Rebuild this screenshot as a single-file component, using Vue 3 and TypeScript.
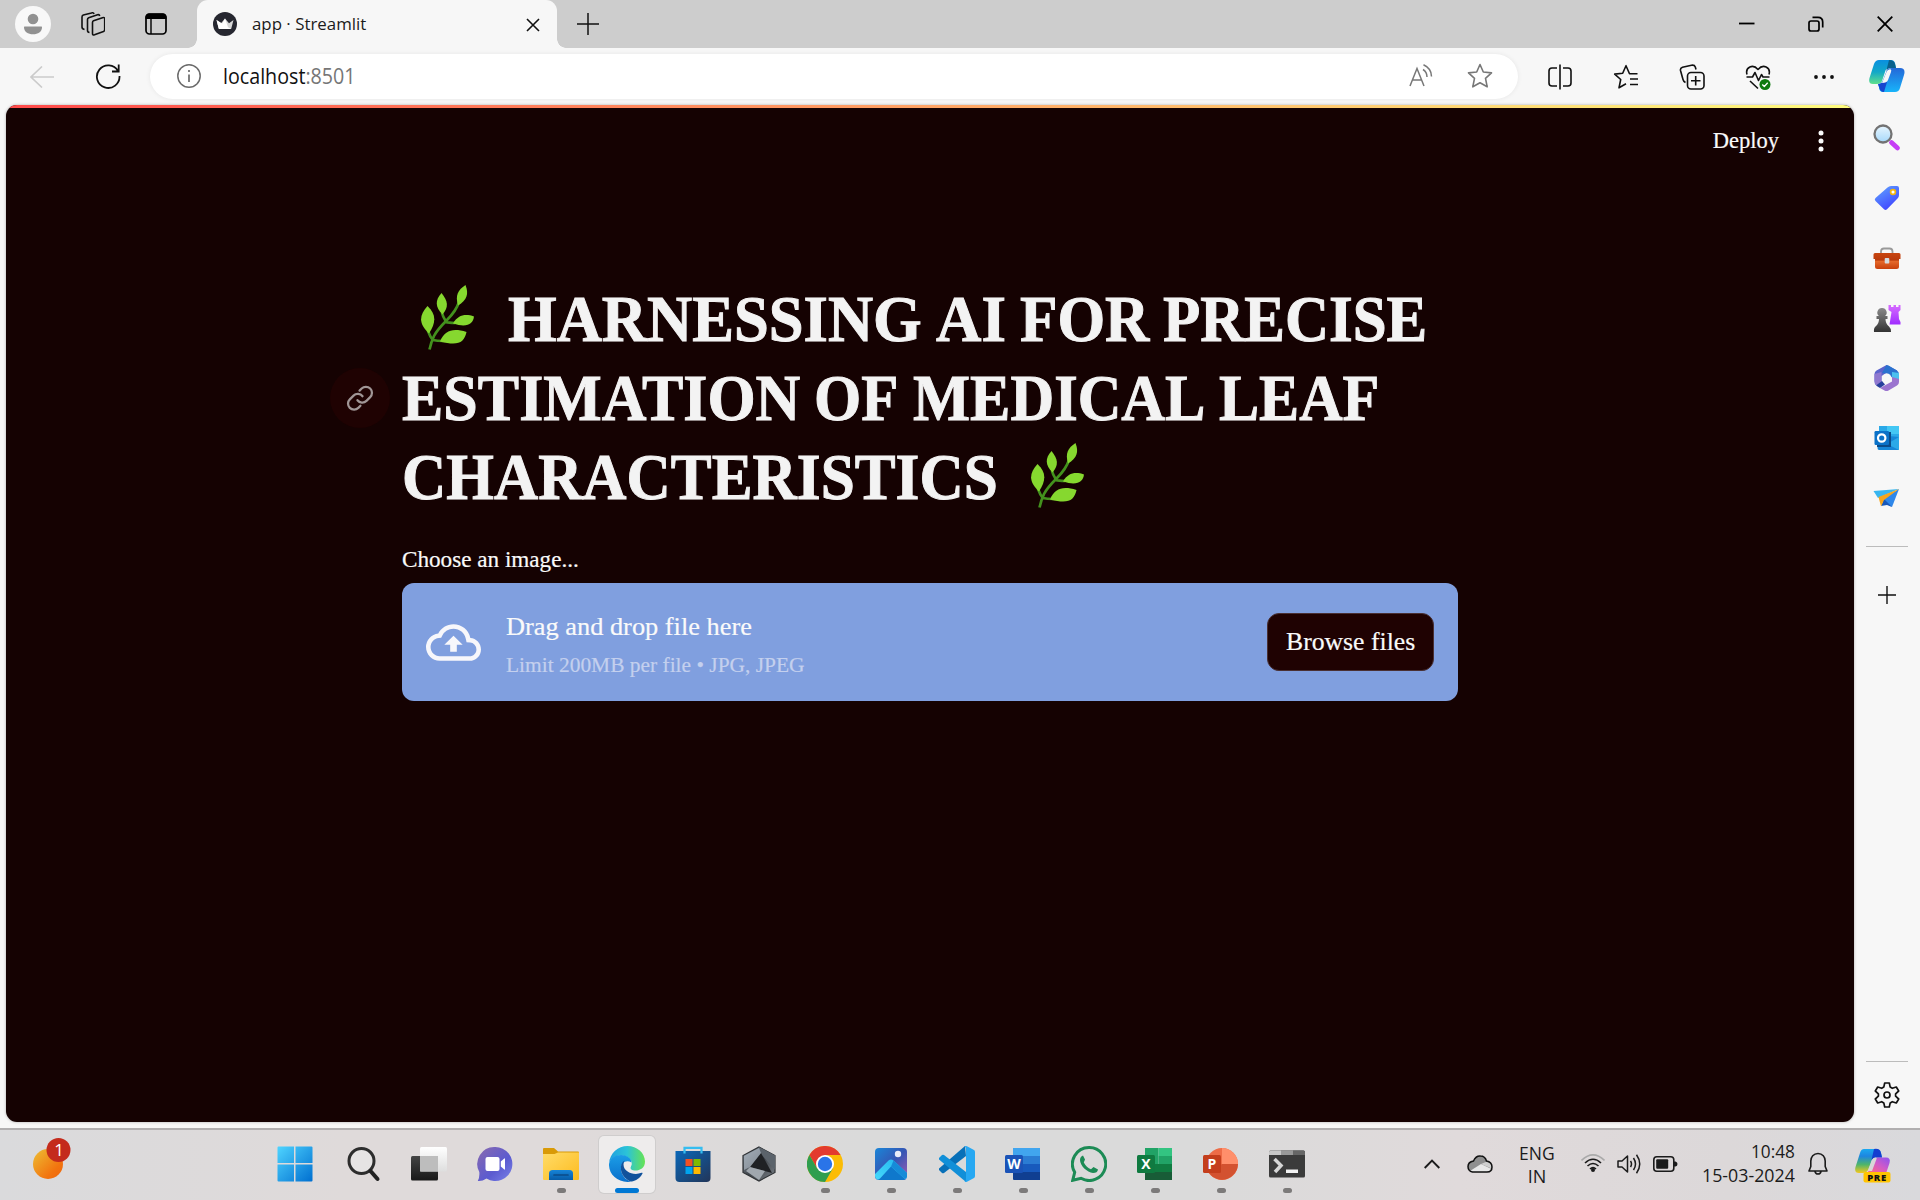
<script setup lang="ts">
import type { ObjectDirective } from 'vue'

interface Word {
  text: string
  width: number
}

// Condenses or widens a line of text to the given width in pixels.
const vFit: ObjectDirective<HTMLElement, number> = {
  mounted(el, binding) {
    const natural = el.offsetWidth
    if (!natural) return
    el.style.transform = `scaleX(${binding.value / natural})`
    el.style.marginRight = `${binding.value - natural}px`
  },
}

const titleTop: Word[] = [
  { text: 'HARNESSING', width: 414 },
  { text: 'AI', width: 70 },
  { text: 'FOR', width: 129 },
  { text: 'PRECISE', width: 264 },
]
const titleMiddle: Word[] = [
  { text: 'ESTIMATION', width: 398 },
  { text: 'OF', width: 84 },
  { text: 'MEDICAL', width: 292 },
  { text: 'LEAF', width: 160 },
]
</script>

<template>
  <div class="screen">
    <svg class="defs" width="0" height="0" aria-hidden="true">
      <defs>
        <symbol id="herb" viewBox="0 0 54 66">
          <path d="M8.5 64.5C10 58 11.5 54 13 51C16 45 22 39 26 35C32 29 36 23 38 17M21 28C22 32 23.500 34 25 36.500M7 46C8.500 50 10 53 12 55.500M24 37C28 37.500 31 38 34 38M12 55C16 56 19 56 22 56" fill="none" stroke="#43911d" stroke-width="2.700" />
          <g fill="#86d82f">
            <path d="M44.500 0C48 9 46 15 37 20.500C34 10 37 5 44.500 0Z" />
            <path d="M20.500 8C27 16 28 22 21.500 29.500C14 22 14 15 20.500 8Z" />
            <path d="M6.500 21C15 29 15.500 37 8 48.500C-2 39-2.500 31 6.500 21Z" />
            <path d="M53 31.500C52 39 46 43 32 38.500C37 30 44 28.500 53 31.500Z" />
            <path d="M45.500 47C43 58 37 61 19 56.500C24 45 32 43 45.500 47Z" />
          </g>
        </symbol>
        <linearGradient id="gStart" x1="0" y1="0" x2="1" y2="1"><stop stop-color="#4fd4ff" /><stop offset="1" stop-color="#006fd0" /></linearGradient>
        <linearGradient id="gSun" x1="0" y1="0" x2="1" y2="1"><stop stop-color="#edbf34" /><stop offset=".7" stop-color="#f2740f" /><stop offset="1" stop-color="#ef640c" /></linearGradient>
        <linearGradient id="gDark" x1="0" y1="0" x2="0" y2="1"><stop stop-color="#444" /><stop offset="1" stop-color="#181818" /></linearGradient>
        <linearGradient id="gWhite" x1="0" y1="0" x2="0" y2="1"><stop stop-color="#fff" /><stop offset="1" stop-color="#dedede" /></linearGradient>
        <linearGradient id="gChat" x1="0" y1="0" x2="1" y2="1"><stop stop-color="#8a6aae" /><stop offset=".6" stop-color="#5b5bd0" /><stop offset="1" stop-color="#7b83e8" /></linearGradient>
        <linearGradient id="gFolder" x1="0" y1="0" x2="1" y2="1"><stop stop-color="#ffdc68" /><stop offset="1" stop-color="#fdbb1f" /></linearGradient>
        <linearGradient id="gBlue" x1="0" y1="0" x2="0" y2="1"><stop stop-color="#1684d8" /><stop offset="1" stop-color="#075ca8" /></linearGradient>
        <linearGradient id="gEdgeTop" x1="0" y1="0" x2="1" y2="0"><stop stop-color="#1f9fe0" /><stop offset=".5" stop-color="#2bc3d8" /><stop offset="1" stop-color="#66e353" /></linearGradient>
        <linearGradient id="gEdge" x1="0" y1="0" x2="0" y2="1"><stop stop-color="#1b9de6" /><stop offset="1" stop-color="#0a6fcb" /></linearGradient>
        <linearGradient id="gStore" x1="0" y1="0" x2="1" y2="1"><stop stop-color="#0a67b8" /><stop offset="1" stop-color="#223558" /></linearGradient>
        <linearGradient id="gHex" x1="0" y1="0" x2="1" y2="1"><stop stop-color="#9aa6b2" /><stop offset=".5" stop-color="#3f444a" /><stop offset="1" stop-color="#7d838a" /></linearGradient>
        <linearGradient id="gPhoto" x1="0" y1="0" x2="1" y2="1"><stop stop-color="#1a86d8" /><stop offset=".5" stop-color="#3556b4" /><stop offset="1" stop-color="#a15bb4" /></linearGradient>
        <linearGradient id="gPeak" x1="0" y1="1" x2="1" y2="0"><stop stop-color="#45d8fb" /><stop offset="1" stop-color="#22b5ee" /></linearGradient>
        <linearGradient id="gCopA" x1="0" y1="0" x2="0" y2="1"><stop stop-color="#0a8fe0" /><stop offset=".5" stop-color="#12a8c8" /><stop offset="1" stop-color="#5fe08c" /></linearGradient>
        <linearGradient id="gCopB" x1="0" y1="0" x2="0" y2="1"><stop stop-color="#2468d8" /><stop offset="1" stop-color="#18b4fa" /></linearGradient>
        <linearGradient id="gCopC" x1="0" y1="0" x2="0" y2="1"><stop stop-color="#1aa8f0" /><stop offset=".3" stop-color="#1d86e0" /><stop offset=".65" stop-color="#4fb56a" /><stop offset="1" stop-color="#f5c81c" /></linearGradient>
        <linearGradient id="gCopD" x1="1" y1="0" x2="0" y2="1"><stop stop-color="#8b53f0" /><stop offset=".5" stop-color="#d05ac8" /><stop offset="1" stop-color="#ff6a80" /></linearGradient>
        <linearGradient id="gTag" x1="0" y1="0" x2=".6" y2="1"><stop stop-color="#62a8ff" /><stop offset="1" stop-color="#4046ff" /></linearGradient>
        <linearGradient id="gBox" x1="0" y1="0" x2="0" y2="1"><stop stop-color="#c8450f" /><stop offset=".45" stop-color="#b93a0c" /><stop offset=".5" stop-color="#e66a2c" /><stop offset="1" stop-color="#c8400c" /></linearGradient>
        <linearGradient id="gPawn" x1="0" y1="0" x2="0" y2="1"><stop stop-color="#8a8a8a" /><stop offset="1" stop-color="#333" /></linearGradient>
        <linearGradient id="gRook" x1="0" y1="0" x2="0" y2="1"><stop stop-color="#d66cff" /><stop offset="1" stop-color="#a02cff" /></linearGradient>
        <linearGradient id="gLens" x1="0" y1="0" x2="0" y2="1"><stop stop-color="#e8f6ff" /><stop offset="1" stop-color="#a6d8fa" /></linearGradient>
      </defs>
    </svg>

    <header class="titlebar">
      <svg class="avatar" width="36" height="36" viewBox="0 0 36 36"><circle cx="18" cy="18" r="18" fill="#f8f8f8" /><g fill="#919191"><circle cx="18" cy="13" r="5.300" /><path d="M9.500 20.500h17q.5 0 .5.800c0 4.500-4 7-9 7s-9-2.500-9-7q0-.8.5-.8Z" /></g></svg>
      <svg class="workspaces" width="24" height="24" viewBox="0 0 24 24" fill="none" stroke="#111" stroke-width="1.600" stroke-linejoin="round"><path d="M12.500 8.800 21.500 5.700Q23.700 5 23.700 7V17.500Q23.700 19 22.500 19.500L13.500 22.800Q11.500 23.400 11.500 21.500V10.500Q11.500 9.200 12.500 8.800Z" /><path d="M8.500 20.500Q6.500 20.300 6.500 18.500V7.500Q6.500 6.200 7.700 5.700L16.500 2.700Q18.300 2.200 18.700 4M3.500 17.500Q1 17 1 15V5Q1 3.600 2.300 3.100L10.500.9Q12.500.3 13 2" /></svg>
      <svg class="tabactions" width="22" height="22" viewBox="0 0 22 22"><rect x="1" y="1" width="20" height="20" rx="3.500" fill="none" stroke="#000" stroke-width="1.700" /><path d="M.5 6V4Q.5.500 4 .5H18Q21.500.500 21.500 4V6ZM5.300 6h1.400v15H5.300Z" /></svg>
      <div class="tab">
        <svg width="24" height="24" viewBox="0 0 24 24"><circle cx="12" cy="12" r="12" fill="#262730" /><path d="M3.500 8 8 11.300 12 6.500 16 11.300 20.500 8 18.300 16.500Q18 17 17.500 17H6.500Q6 17 5.700 16.500Z" fill="#d8d8d8" /><path d="M3.500 8 18 17H6.500Q6 17 5.700 16.500ZM12 6.500 15 15 9 12Z" fill="#fff" /></svg>
        <span v-fit="114" class="fit tabname">app · Streamlit</span>
        <svg class="tabclose" width="14" height="14" viewBox="0 0 14 14" stroke="#111" stroke-width="1.600"><path d="M1 1 13 13M13 1 1 13" /></svg>
      </div>
      <svg class="newtab" width="22" height="22" viewBox="0 0 22 22" stroke="#111" stroke-width="1.500"><path d="M11 0V22M0 11H22" /></svg>
      <div class="winbtns">
        <svg width="16" height="16" viewBox="0 0 16 16" stroke="#000" stroke-width="1.800"><path d="M0 7.500H15.500" /></svg>
        <svg width="16" height="16" viewBox="0 0 16 16" fill="none" stroke="#000" stroke-width="1.700"><rect x="1" y="5" width="10" height="10" rx="2" /><path d="M4.500 1.300H10Q14.700 1.300 14.700 6V11.500" /></svg>
        <svg width="16" height="16" viewBox="0 0 16 16" stroke="#000" stroke-width="1.800"><path d="M.7.700 15.300 15.300M15.300.700.7 15.300" /></svg>
      </div>
    </header>

    <nav class="toolbar">
      <svg class="back" width="24" height="22" viewBox="0 0 24 22" fill="none" stroke="#cbcbcb" stroke-width="1.600"><path d="M24 11H1M12 .5 1 11 12 21.500" /></svg>
      <svg class="reload" width="26" height="26" viewBox="0 0 26 26" fill="none" stroke="#111" stroke-width="1.800"><path d="M23 8A11.300 11.300 0 1 0 24.500 13M23.700 1.500V8.500H17" /></svg>
      <div class="address">
        <svg width="24" height="24" viewBox="0 0 24 24" fill="none" stroke="#6b6b6b" stroke-width="1.500"><circle cx="12" cy="12" r="11.200" /><path d="M12 10.500V18M12 6V8" stroke-width="1.700" /></svg>
        <span v-fit="133" class="fit url">localhost<i>:8501</i></span>
        <svg class="read" width="24" height="24" viewBox="0 0 24 24" fill="none" stroke="#777" stroke-width="1.500"><path d="M1 22 8 4.500 15 22M3.600 16H12.400M14 5.500Q18 8 18 13M14.500.800Q22.500 4.500 22.500 12.500" /></svg>
        <svg class="fav" width="26" height="26" viewBox="0 0 26 26" fill="none" stroke="#777" stroke-width="1.600" stroke-linejoin="round"><path d="M13 1.500 16.300 9 24.500 9.900 18.500 15.300 20.200 23.800 13 19.800 5.800 23.800 7.500 15.300 1.500 9.900 9.700 9Z" /></svg>
      </div>
      <div class="tools">
        <svg width="26" height="26" viewBox="0 0 26 26" fill="none" stroke="#111" stroke-width="1.600"><path d="M10 4H5Q2 4 2 7V19Q2 22 5 22H10M16 4H21Q24 4 24 7V19Q24 22 21 22H16M13 .5V25.500" /></svg>
        <svg width="26" height="26" viewBox="0 0 26 26" fill="none" stroke="#111" stroke-width="1.600" stroke-linejoin="round"><path d="M24.500 9.800H16.500L13 1.700 9.700 9.200 1.700 10.100 7.700 15.500 6 23.800 13 19.800M17 15H25M17 20.500H25" /></svg>
        <svg width="26" height="26" viewBox="0 0 26 26" fill="none" stroke="#111" stroke-width="1.600"><path d="M6.500 18.500Q4.500 17.500 4 15.500L1.500 6.500Q1 4 3.500 3.200L12.500 1.200Q15.500.700 16.300 3L17 5.500" /><rect x="8.500" y="8.500" width="16.500" height="16.500" rx="3.500" /><path d="M16.700 12V21.500M12 16.700H21.500" /></svg>
        <svg width="26" height="26" viewBox="0 0 26 26" fill="none" stroke="#111" stroke-width="1.600" stroke-linejoin="round"><path d="M2 10.500C0 3 8-.5 13 5.500C18-.5 26 3 24 10.500M1.500 13H7.500L10 8.500 13.500 16.500 16.500 10.500 18 13H24.500M5 17 13 24.500" /><circle cx="20" cy="20.500" r="5.500" fill="#0f7b0f" stroke="none" /><path d="m17.300 20.500 2 2 3.400-3.700" stroke="#fff" stroke-width="1.300" /></svg>
        <svg width="26" height="26" viewBox="0 0 26 26" fill="#111"><circle cx="5" cy="13" r="1.900" /><circle cx="13" cy="13" r="1.900" /><circle cx="21" cy="13" r="1.900" /></svg>
      </div>
      <svg class="copilot" width="36" height="33" viewBox="0 0 36 33"><path d="M10 0H22Q25 0 26 3L27 8H20Q17 8 16 12L13 21Q12 24 8 24H4Q-1 24 .5 18L5 4Q6.500 0 10 0Z" fill="url(#gCopA)" /><path d="M20 0Q25 0 26 4L27 8H22Q18 8 17 12L19 4Z" fill="#09608c" /><path d="M26 32H14Q10 32 10 27L9 24Q13 24 14 20L18 10Q19 8 23 8H31Q37 8 35 15L31 28Q30 32 26 32Z" fill="url(#gCopB)" /><path d="M9 24Q13 24 14 21L18 22 15 32Q11 32 10 27Z" fill="#1746cf" /><path d="M20 9.500Q23 8.500 22 12L19 20Q18 23 13 23L17.500 12Q18 10 20 9.500Z" fill="#f7f7f7" /></svg>
    </nav>

    <div class="middle">
      <main class="page">
        <div class="decoration"></div>
        <div class="appbar">
          <span v-fit="66" class="fit">Deploy</span>
          <svg width="6" height="22" viewBox="0 0 6 22" fill="#fafafa"><circle cx="3" cy="3" r="2.500" /><circle cx="3" cy="11" r="2.500" /><circle cx="3" cy="19" r="2.500" /></svg>
        </div>
        <section class="hero">
          <div class="anchor">
            <svg width="36" height="36" viewBox="0 0 24 24" fill="none" stroke="#a09696" stroke-width="1.500" stroke-linecap="round"><path d="M10.300 13.500a4 4 0 0 0 6 .4l2.500-2.500a4 4 0 0 0-5.700-5.700l-1.400 1.400" /><path d="M13.700 10.800a4 4 0 0 0-6-.4l-2.500 2.500a4 4 0 0 0 5.700 5.700l1.400-1.400" /></svg>
          </div>
          <h1>
            <span class="line first"><svg class="herb" width="54" height="66"><use href="#herb" /></svg><span v-for="word in titleTop" :key="word.text" v-fit="word.width" class="fit">{{ word.text }}</span></span>
            <span class="line second"><span v-for="word in titleMiddle" :key="word.text" v-fit="word.width" class="fit">{{ word.text }}</span></span>
            <span class="line"><span v-fit="596" class="fit">CHARACTERISTICS</span><svg class="herb last" width="54" height="66"><use href="#herb" /></svg></span>
          </h1>
        </section>
        <section class="uploader">
          <label><span v-fit="177" class="fit">Choose an image...</span></label>
          <div class="dropzone">
            <svg width="55" height="55" viewBox="0 0 24 24" fill="#f7f7fb"><path d="M19.350 10.040A7.490 7.490 0 0 0 12 4C9.110 4 6.600 5.640 5.350 8.040A5.994 5.994 0 0 0 0 14c0 3.310 2.690 6 6 6h13c2.760 0 5-2.240 5-5 0-2.640-2.050-4.780-4.650-4.960zM19 18H6c-2.210 0-4-1.790-4-4 0-2.050 1.530-3.760 3.560-3.970l1.070-.110.5-.950A5.469 5.469 0 0 1 12 6c2.620 0 4.880 1.860 5.390 4.430l.3 1.500 1.530.110A2.980 2.980 0 0 1 22 15c0 1.650-1.350 3-3 3zM8 13h2.550v3h2.900v-3H16l-4-4z" /></svg>
            <div class="hints">
              <span class="big"><span v-fit="246" class="fit">Drag and drop file here</span></span>
              <span class="small"><span v-fit="299" class="fit">Limit 200MB per file • JPG, JPEG</span></span>
            </div>
            <button type="button"><span v-fit="129" class="fit">Browse files</span></button>
          </div>
        </section>
      </main>

      <aside class="sidebar">
        <svg width="28" height="28" viewBox="0 0 28 28"><path d="m18.500 18.500 6 5.500" stroke="#c53cf5" stroke-width="4.800" stroke-linecap="round" /><circle cx="10" cy="10" r="8.500" fill="url(#gLens)" stroke="#737373" stroke-width="2.300" /></svg>
        <svg width="28" height="28" viewBox="0 0 28 28"><path d="M14.500 3.500Q16 2 18 2H24Q26 2 26 4V11Q26 13 24.500 14.500L14 25.300Q12.500 26.500 11 25.300L2.500 17Q1 15.500 2.500 14Z" fill="url(#gTag)" /><circle cx="20" cy="8" r="2.400" fill="#fff" stroke="#f5b50c" stroke-width="1.700" /></svg>
        <svg width="28" height="28" viewBox="0 0 28 28"><path d="M8 9V7.500Q8 4.500 11 4.500H16.500Q19.500 4.500 19.500 7.500V9" fill="none" stroke="#999" stroke-width="1.800" /><path d="M2 9H26Q27.500 9 27.500 10.500V15H26V22.500Q26 25 23.500 25H4.500Q2 25 2 22.500V15H.5V10.500Q.5 9 2 9Z" fill="url(#gBox)" /><rect x="11.700" y="14" width="4.600" height="5.500" rx="1" fill="#d5dbe0" /></svg>
        <svg width="28" height="28" viewBox="0 0 28 28"><path d="M15.500 1H18V3H20.500V1H23V3H25.500V1H27.500V6L25.500 8 26 15 27.500 18V20.500H16.500L18.500 8 15.500 6Z" fill="url(#gRook)" /><path d="M9 4A4.500 4.500 0 0 1 12 12H14.500V15H12.500Q12.500 20 16 22.500 18 24 18 28H1Q.500 24 2.500 22.500 6 20 6 15H3.500V12H6A4.500 4.500 0 0 1 9 4Z" fill="url(#gPawn)" /></svg>
        <svg width="28" height="28" viewBox="0 0 28 28"><path d="M13.500 1 24 6.500V14L14 9 8.500 12V20L3 21Q1.500 20 1.500 17V10Q1.500 7.500 3.500 6.500Z" fill="#5b63cc" /><path d="M13.500 1 15.500 1.500 24 6.500Q26 8 26 10V15L19 13.500 14 9.500 9 9Z" fill="#2b72cf" /><path d="M19 8 26 9V16L19 14Z" fill="#4cc1ee" /><path d="M26 15V18Q26 20.500 24 21.500L15.500 26.500Q13.500 27.500 11.500 26.500L7 24 19 17.500V13Z" fill="#9b74cf" /><path d="M1.500 10V17Q1.500 20 3.500 21.300L8.500 18V8Z" fill="#8f78cf" /><path d="M3 21.500 9 17 12 20.500 7 24Z" fill="#283f9c" /><circle cx="13.800" cy="14" r="4.600" fill="#f7f7f7" /></svg>
        <svg width="28" height="28" viewBox="0 0 28 28"><rect x="6" y="2" width="20" height="12" fill="#2aa9e8" /><path d="M14 2H26V10H14Z" fill="#43c7f4" /><path d="M5 11 26 13V25Q26 26 25 26H6Q4.500 26 4.500 24Z" fill="#1686d7" /><path d="m26 13-12 7 12 6Z" fill="#2aa9e8" /><rect x="4" y="8" width="14" height="15" fill="#0b4b88" /><rect x="1.500" y="7" width="14.500" height="14" rx="1.200" fill="#0b72c8" /><circle cx="8.700" cy="14" r="3.700" fill="none" stroke="#fff" stroke-width="2.200" /></svg>
        <svg width="28" height="28" viewBox="0 0 28 28"><path d="M.5 7 26 5 5 14Z" fill="#38b6f0" /><path d="M26 5 19 23 8 16Z" fill="#2e87ea" /><path d="M11 15 19 23 14 21 8 22Z" fill="#1757ba" /><path d="M26 5 11 16 8 22.500 5.500 13Z" fill="#f6a51c" /></svg>
        <hr />
        <svg class="add" width="18" height="18" viewBox="0 0 18 18" stroke="#111" stroke-width="1.400"><path d="M9 0V18M0 9H18" /></svg>
        <hr class="lower" />
        <svg class="gear" width="26" height="26" viewBox="0 0 26 26" fill="none" stroke="#111" stroke-width="1.700" stroke-linejoin="round"><path d="M10.700 1H15.300L16.200 5.100 18.300 6.300 22.300 5 24.700 9 21.600 11.800V14.200L24.700 17 22.300 21 18.300 19.700 16.200 20.900 15.300 25H10.700L9.800 20.900 7.700 19.700 3.700 21 1.300 17 4.400 14.200V11.800L1.300 9 3.700 5 7.700 6.300 9.800 5.100Z" /><circle cx="13" cy="13" r="3" /></svg>
      </aside>
    </div>

    <footer class="taskbar">
      <svg class="widget" width="40" height="44" viewBox="0 0 40 44"><circle cx="16" cy="27" r="15" fill="url(#gSun)" /><circle cx="26.500" cy="13" r="12" fill="#c42b1c" /><text x="27" y="19" text-anchor="middle" font-family="Open Sans, sans-serif" font-size="17" fill="#fff">1</text></svg>
      <div class="apps">
        <div class="app start"><svg viewBox="0 0 36 36"><path d="M.5 1.500Q.5.500 1.500.500H17V17H.5ZM18.500.500H34.500Q35.500.500 35.500 1.500V17H18.500ZM.5 18.500H17V35.500H1.500Q.5 35.500.5 34.500ZM18.500 18.500H35.500V34.500Q35.500 35.500 34.500 35.500H18.500Z" fill="url(#gStart)" /></svg></div>
        <div class="app"><svg viewBox="0 0 36 36"><circle cx="16.500" cy="15" r="12.500" fill="#e6e4e4" stroke="#2d2d2d" stroke-width="3" /><path d="m25.500 25 7 8" stroke="#222" stroke-width="4" stroke-linecap="round" /></svg></div>
        <div class="app"><svg viewBox="0 0 36 36"><rect y="10" width="27" height="24.500" rx="1.500" fill="url(#gDark)" /><rect x="9" y="1" width="27" height="24.500" rx="1.500" fill="url(#gWhite)" /><path d="M9 10H27V25.500H9Z" fill="#bdbdbd" /></svg></div>
        <div class="app"><svg viewBox="0 0 36 36"><path d="M18 1A17 17 0 1 1 9.500 32.500Q5 35.500.8 35Q2.800 31.500 2.300 26A17 17 0 0 1 18 1Z" fill="url(#gChat)" /><rect x="8.500" y="11" width="14" height="14" rx="2" fill="#fff" /><path d="M23.800 15.500 27.300 12.500Q28 12 28 13V23Q28 24 27.300 23.500L23.800 20.500Z" fill="#fff" /></svg></div>
        <div class="app"><svg viewBox="0 0 36 36"><path d="M0 3Q0 2 1 2H11L15 5.500H35Q36 5.500 36 6.500V12H0Z" fill="#d99a07" /><path d="M0 8H11.500L15 6.500H36V33Q36 34 35 34H1Q0 34 0 33Z" fill="url(#gFolder)" /><path d="M6 34V27.500Q6 24 9.500 24H26.500Q30 24 30 27.500V34Z" fill="url(#gBlue)" /><path d="M11 29H25" stroke="#0b4b88" stroke-width="1.700" stroke-linecap="round" /></svg><i class="dot"></i></div>
        <div class="app active"><svg viewBox="0 0 36 36"><path d="M0 17C1 7 9 0 18.500 0C28 0 36 7 36 15.500C36 22 31 24.500 26.500 24.500C23 24.500 20.500 23 22 20.500C25 15 19 9.500 12 9.500C6 9.500 1.500 13 0 17Z" fill="url(#gEdgeTop)" /><path d="M0 18C1 12 6 9 12 9C18.500 9 22.500 13 22.500 16.500C16 12.500 10 19 12.500 26C14 31 18 35 23 35.500C10 38-.5 29 0 18Z" fill="url(#gEdge)" /><path d="M15.500 14.500C10 18 10.500 28 18 33.500Q21 36 24 35.300Q31 33 33.500 27.500Q34 26.300 32.500 26.800C25 30 14.500 26 14.500 18.500Q14.500 16 15.500 14.500Z" fill="#11529c" /></svg><i class="dot"></i></div>
        <div class="app"><svg viewBox="0 0 36 36"><path d="M.5 5H35.500V32Q35.500 36 31.500 36H4.500Q.500 36 .5 32Z" fill="url(#gStore)" /><path d="M9.500 7.500V1.800H26.500V7.500" fill="none" stroke="#35bdf0" stroke-width="2.200" /><path d="M10.500 13H17.500V20H10.500Z" fill="#f25022" /><path d="M18.500 13H25.500V20H18.500Z" fill="#7fba00" /><path d="M10.500 21H17.500V28H10.500Z" fill="#00a4ef" /><path d="M18.500 21H25.500V28H18.500Z" fill="#ffb900" /></svg></div>
        <div class="app"><svg viewBox="0 0 36 36"><path d="M18 1 34 9.500V26.500L18 35 2 26.500V9.500Z" fill="url(#gHex)" stroke="#303336" stroke-width="1.200" /><path d="M18 1 34 9.500V24L20 8Z" fill="#5b636b" /><path d="M20 7 31 27 9 21Z" fill="#1f2124" /><path d="M20 7 9 21 3 24V10L18 2Z" fill="#aab4be" opacity=".7" /><path d="M5 25 9 21 24 25 18 34Z" fill="#a0a7ae" /></svg></div>
        <div class="app"><svg viewBox="0 0 36 36"><circle cx="18" cy="18" r="18" fill="#fbbc05" /><path d="M18 9H33.600A18 18 0 0 0 2.400 9L10.200 22.500Z" fill="#e33b2e" /><path d="M2.400 9A18 18 0 0 0 18 36L25.800 22.500H10.200Z" fill="#2f9e4f" /><circle cx="18" cy="18" r="9" fill="#fff" /><circle cx="18" cy="18" r="7.200" fill="#2a74e8" /></svg><i class="dot"></i></div>
        <div class="app"><svg viewBox="0 0 36 36"><rect x="2" y="2" width="32" height="32" rx="4" fill="url(#gPhoto)" /><path d="M5 34 17 21Q18.500 19.500 20 21L33 33Q32 34 30 34Z" fill="#0f78cc" /><path d="M2 28 15.500 14.500Q18 12.500 20.500 14.500L34 27V31Q33.500 33 32 33L18 20.500 7 32.500Q5.500 34 4 33.500 2 32.500 2 30Z" fill="url(#gPeak)" /><path d="m20.500 14.500 13.500 12.500V31L32 33 18 20.500Z" fill="#168bd8" /><circle cx="25" cy="8" r="3.200" fill="#e8ecf8" /></svg><i class="dot"></i></div>
        <div class="app"><svg viewBox="0 0 36 36"><path d="M26 0 0 22.500V24L3 27Q4 27.500 5 27L27 10Z" fill="#0870b8" /><path d="M0 12 3 9Q4 8.500 5 9L27 26V36L0 13.500Z" fill="#118fd8" /><path d="M25.500 35.800Q27 36.300 28 35.800L35 32Q36 31.500 36 30V6Q36 4.500 35 4L28 .3Q27-.3 25.500.3 27 1.500 27 3V33Q27 35 25.500 35.800Z" fill="#27a8f2" /></svg><i class="dot"></i></div>
        <div class="app"><svg viewBox="0 0 36 36"><path d="M8 2H35V10H8Z" fill="#41a5ee" /><path d="M8 10H35V18H8Z" fill="#2b7cd3" /><path d="M8 18H35V26H8Z" fill="#185abd" /><path d="M8 26H35V34H9Q8 34 8 33Z" fill="#103f91" /><rect y="9" width="18" height="18" rx="1.500" fill="#1a53b7" /><text x="9" y="23" text-anchor="middle" class="letter">W</text></svg><i class="dot"></i></div>
        <div class="app"><svg viewBox="0 0 36 36"><path d="M18 1.500A16.500 16.500 0 1 1 10 32.300L1.700 34.300 3.700 26.300A16.500 16.500 0 0 1 18 1.500Z" fill="none" stroke="#1c8b55" stroke-width="3" /><path d="M12 9.500 14 13.500 12.800 16.500Q15.500 21.500 20 23.300L22.500 21 27 23.500Q26.500 27 22 27C16 26.500 9 19.500 9 14Q9 10.500 12 9.500Z" fill="#1c8b55" /></svg><i class="dot"></i></div>
        <div class="app"><svg viewBox="0 0 36 36"><path d="M8 2H21.500V10H8ZM8 10H21.500V18H8Z" fill="#21a366" /><path d="M21.500 2H35V10H21.500Z" fill="#33c481" /><path d="M21.500 10H35V18H21.500Z" fill="#21a366" /><path d="M8 18H35V26H8Z" fill="#107c41" /><path d="M8 26H35V34H8Z" fill="#185c37" /><rect y="9" width="18" height="18" rx="1.500" fill="#0f7a40" /><text x="9" y="23" text-anchor="middle" class="letter">X</text></svg><i class="dot"></i></div>
        <div class="app"><svg viewBox="0 0 36 36"><circle cx="19" cy="18" r="16" fill="#ed6c47" /><path d="M19 2A16 16 0 0 1 35 18H19Z" fill="#ff8f6b" /><path d="M35 18A16 16 0 0 1 6 27L19 18Z" fill="#d35230" /><rect y="9" width="18" height="18" rx="1.500" fill="#c43e1c" /><text x="9" y="23" text-anchor="middle" class="letter">P</text></svg><i class="dot"></i></div>
        <div class="app"><svg viewBox="0 0 36 36"><rect y="4.500" width="36" height="27" rx="1.500" fill="#3b3b3b" /><path d="M0 9V6Q0 4.500 1.500 4.500H12V9Z" fill="#c8c8c8" /><path d="M12 4.500H24V9H12Z" fill="#999" /><path d="M24 4.500H34.500Q36 4.500 36 6V9H24Z" fill="#666" /><path d="m5.500 13 6.500 6.500L6 26" fill="none" stroke="#d6d6d6" stroke-width="3.500" /><rect x="17" y="23.500" width="12" height="3.500" fill="#f2f2f2" /></svg><i class="dot"></i></div>
      </div>
      <div class="tray">
        <svg width="16" height="10" viewBox="0 0 16 10" fill="none" stroke="#1b1b1b" stroke-width="1.900"><path d="m.7 9 7.300-7.300L15.300 9" /></svg>
        <svg class="cloud" width="26" height="20" viewBox="0 0 26 20"><path d="M5.500 18Q1 17 1 12.500Q1 8 6.500 7Q9 1.500 13.500 2Q18 2 19.500 7Q25 8 25 13Q25 18 20 18Z" fill="#8f8f8f" /><path d="M3 17 14 10 24.500 15Q23 18 20 18H5.500Z" fill="#e8e8e8" /><path d="M14 10 20 7.500Q25 9 24.700 14.500Z" fill="#cfcfcf" /><path d="M5.500 18Q1 17 1 12.500Q1 8 6.500 7Q9 1.500 13.500 2Q18 2 19.500 7Q25 8 25 13Q25 18 20 18Z" fill="none" stroke="#111" stroke-width="1.500" /></svg>
        <div class="lang"><span><span v-fit="36" class="fit">ENG</span></span><span><span v-fit="19" class="fit">IN</span></span></div>
        <svg class="wifi" width="24" height="20" viewBox="0 0 24 20" fill="none" stroke="#1b1b1b" stroke-width="1.600"><path d="M.5 7.500Q12-3.800 23.500 7.500" stroke="#aaa" /><path d="M4 10Q12 2.500 20 10M6.500 13Q12 8 17.500 13M9 16Q12 13.300 15 16" /><circle cx="12" cy="17" r="2" fill="#1b1b1b" stroke="none" /></svg>
        <svg class="sound" width="24" height="20" viewBox="0 0 24 20" fill="none" stroke="#1b1b1b" stroke-width="1.500" stroke-linejoin="round"><path d="M1 7H5L10.500 2V18L5 13H1ZM13.500 7Q15.500 10 13.500 13M16.500 4Q20.500 10 16.500 16M19.500.800Q26 10 19.500 19.200" /></svg>
        <svg class="battery" width="25" height="16" viewBox="0 0 25 16"><rect x=".8" y=".8" width="20" height="14.400" rx="3" fill="none" stroke="#1b1b1b" stroke-width="1.600" /><rect x="3.200" y="3.200" width="12" height="9.600" rx="1" fill="#1b1b1b" /><path d="M21 5.500H22.500Q24.500 6 24.500 8T22.500 10.500H21Z" fill="#1b1b1b" /></svg>
        <div class="clock"><span><span v-fit="44" class="fit">10:48</span></span><span><span v-fit="93" class="fit">15-03-2024</span></span></div>
        <svg class="bell" width="20" height="24" viewBox="0 0 20 24" fill="none" stroke="#1b1b1b" stroke-width="1.600" stroke-linejoin="round"><path d="M10 1.500C5.500 1.500 2.800 5 2.800 9V14.500L1 19H19L17.200 14.500V9C17.200 5 14.500 1.500 10 1.500ZM7 19.500Q7.500 22 10 22T13 19.500" /></svg>
        <svg class="pre" width="36" height="36" viewBox="0 0 36 36"><path d="M9 1H21Q25 1 26 5L27 9.500H20Q17 10 16 14L13 22Q11.500 25 8 25H4Q-1 25 .5 19L5 5Q6 1 9 1Z" fill="url(#gCopC)" /><path d="M19 1Q25 0 26 5L27 9.500H21Q18 9.500 16.500 12Z" fill="#143ed0" /><path d="M22 9.500H31Q36 9.500 34.500 15L31.500 24H13Q16 18 19 12 20 9.500 22 9.500Z" fill="url(#gCopD)" /><path d="M20 9.500Q22.500 9 21.500 11L17 23H13L17 12.500Q18 9.500 20 9.500Z" fill="#d9d7d8" /><rect x="8.500" y="24" width="27" height="10.500" rx="2" fill="#ffc400" /><text x="22" y="32.500" text-anchor="middle" font-family="Open Sans, sans-serif" font-weight="800" font-size="9.500" letter-spacing=".6" fill="#111">PRE</text></svg>
      </div>
    </footer>
  </div>
</template>

<style>
html,
body {
  margin: 0;
  overflow: hidden;
}
</style>

<style scoped>
.screen {
  width: 1920px;
  height: 1200px;
  display: flex;
  flex-direction: column;
  overflow: hidden;
  background: #f7f7f7;
  font-family: 'Open Sans', 'Noto Sans', sans-serif;
}
.defs { position: absolute; }
svg { display: block; flex: none; }
.fit {
  display: inline-block;
  flex: none;
  white-space: pre;
  transform-origin: 0 50%;
}

/* Title bar */
.titlebar {
  height: 48px;
  display: flex;
  align-items: center;
  background: #cdcdcd;
  flex: none;
}
.avatar { margin-left: 15px; }
.workspaces { margin-left: 30px; }
.tabactions { margin-left: 40px; }
.tab {
  position: relative;
  margin-left: 30px;
  width: 360px;
  height: 48px;
  box-sizing: border-box;
  padding: 0 17px 0 16px;
  display: flex;
  align-items: center;
  background: #f7f7f7;
  border-radius: 11px 11px 0 0;
}
.tab::before,
.tab::after {
  content: '';
  position: absolute;
  bottom: 0;
  width: 9px;
  height: 9px;
}
.tab::before { left: -9px; background: radial-gradient(circle at 0 0, transparent 8.5px, #f7f7f7 9px); }
.tab::after { right: -9px; background: radial-gradient(circle at 100% 0, transparent 8.5px, #f7f7f7 9px); }
.tabname { margin-left: 15px; font-size: 17px; line-height: 24px; color: #1b1b1b; }
.tabclose { margin: 2px 0 0 auto; }
.newtab { margin-left: 20px; }
.winbtns { display: flex; gap: 53px; margin: 0 27px 1px auto; }

/* Toolbar */
.toolbar {
  height: 57px;
  display: flex;
  align-items: center;
  flex: none;
}
.back { margin-left: 30px; }
.reload { margin: 0 0 1px 41px; }
.address {
  margin-left: 29px;
  width: 1368px;
  height: 45px;
  box-sizing: border-box;
  padding: 0 25px 1px 27px;
  display: flex;
  align-items: center;
  background: #fff;
  border-radius: 23px;
  box-shadow: 0 0 5px rgba(0, 0, 0, .07);
}
.url { margin: 0 0 1px 22px; font-size: 21px; line-height: 30px; color: #111; }
.url i { font-style: normal; color: #767676; }
.read { margin-left: auto; }
.fav { margin-left: 34px; }
.tools { display: flex; gap: 40px; margin-left: 29px; }
.copilot { margin: 0 15px 0 auto; }

/* Page and sidebar */
.middle { height: 1023px; display: flex; flex: none; }
.page {
  width: 1848px;
  height: 1017px;
  margin-left: 6px;
  display: flex;
  flex-direction: column;
  background: #150202;
  border-radius: 11px;
  overflow: hidden;
  box-shadow: 0 0 3px rgba(0, 0, 0, .3);
  color: #fafafa;
  font-family: 'Liberation Serif', serif;
  -webkit-text-stroke: .2px currentColor;
}
.decoration { height: 3px; flex: none; background: linear-gradient(90deg, #ff4b4b, #fffd80); }
.appbar {
  display: flex;
  justify-content: flex-end;
  align-items: center;
  height: 30px;
  margin-top: 18px;
  padding-right: 30px;
  gap: 39px;
  font-size: 22.5px;
  line-height: 30px;
}
.hero { display: flex; align-items: center; gap: 12px; margin: 123px 0 0 324px; }
.anchor {
  width: 60px;
  height: 60px;
  display: flex;
  align-items: center;
  justify-content: center;
  border-radius: 50%;
  background: #1f0202;
}
h1 {
  margin: 0;
  font-size: 66.5px;
  font-weight: 700;
  line-height: 79px;
  color: #f3f3f3;
  -webkit-text-stroke: 1px currentColor;
}
.line { display: flex; height: 79px; align-items: flex-start; }
.first { padding-left: 19px; gap: 14px; }
.second { gap: 14px; }
.herb { margin: 6px 19px 0 0; }
.last { margin: 6px 0 0 33px; }
.uploader { width: 1056px; margin: 28px 0 0 396px; }
label { display: block; height: 38px; padding-top: 1px; font-size: 22.5px; line-height: 30px; }
.dropzone {
  height: 118px;
  box-sizing: border-box;
  padding: 0 24px;
  display: flex;
  align-items: center;
  background: #809fdf;
  border-radius: 12px;
}
.hints { margin-left: 25px; padding-top: 5px; display: flex; flex-direction: column; }
.big { height: 38px; font-size: 25.5px; line-height: 38px; }
.small { height: 36px; font-size: 22px; line-height: 37px; color: #c4d0ee; }
button {
  width: 167px;
  height: 58px;
  margin-left: auto;
  padding: 0 0 0 18px;
  text-align: left;
  background: #1f0202;
  border: 1px solid #4a3033;
  border-radius: 12px;
  color: #fafafa;
  font: 25.5px/54px 'Liberation Serif', serif;
}
.sidebar {
  flex: 1;
  height: 1023px;
  display: flex;
  flex-direction: column;
  align-items: center;
  padding: 19px 1px 0 0;
  box-sizing: border-box;
}
.sidebar > svg { margin-bottom: 32px; }
.sidebar hr { width: 42px; height: 1px; margin: 2px 0 0; border: 0; background: #bcbcbc; flex: none; }
.sidebar > .add { margin: 39px 0 0; }
.sidebar .lower { margin-top: 457px; }
.sidebar > .gear { margin: 20px 0 0; }

/* Taskbar */
.taskbar {
  height: 72px;
  box-sizing: border-box;
  border-top: 2px solid #b1afb0;
  display: flex;
  background: linear-gradient(90deg, #dadadc, #dfdada 18%, #dfdada 30%, #dadada 45%, #dadada 62%, #e0dadb 76%, #dcd8d9 90%, #d9d9dc);
  color: #1b1b1b;
}
.widget { margin: 7px 0 0 32px; }
.apps { display: flex; gap: 10px; margin: 6px 0 0 195px; }
.app {
  width: 56px;
  height: 57px;
  display: flex;
  flex-direction: column;
  align-items: center;
  border-radius: 5px;
}
.start { margin-right: 2px; }
.app svg { width: 36px; height: 36px; margin-top: 10px; }
.active { background: #eeecec; box-shadow: 0 0 0 1px #cfcdcd; }
.dot { width: 9px; height: 5px; margin-top: 6px; border-radius: 3px; background: #7c7a7a; }
.active .dot { width: 24px; background: #0078d4; }
.letter { font: 700 14px 'Open Sans', sans-serif; fill: #fff; }
.tray { display: flex; align-items: flex-start; margin-left: auto; padding-right: 29px; }
.tray > svg { margin-top: 29px; }
.tray > .cloud { margin: 24px 0 0 27px; }
.lang,
.clock { display: flex; flex-direction: column; font-size: 18px; line-height: 24px; }
.lang { width: 36px; margin: 12px 0 0 26px; align-items: center; line-height: 23px; }
.tray > .wifi { margin: 23px 0 0 26px; }
.tray > .sound { margin: 24px 0 0 12px; }
.tray > .battery { margin: 26px 0 0 12px; }
.clock { width: 92px; margin: 9px 0 0 25px; align-items: flex-end; }
.tray > .bell { margin: 22px 0 0 13px; }
.tray > .pre { margin: 18px 0 0 27px; }
</style>
